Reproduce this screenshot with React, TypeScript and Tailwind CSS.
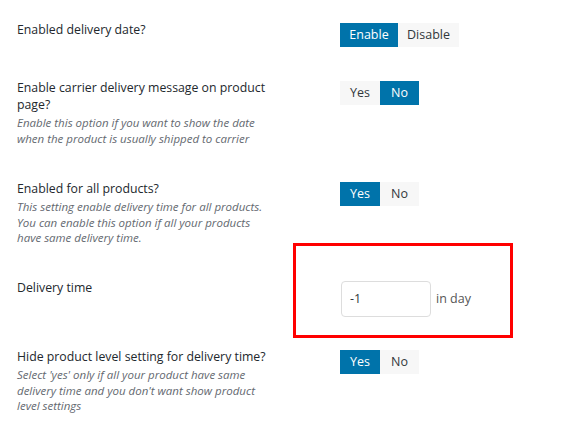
import React from 'react';

type Opt = { label: string; width: number; active: boolean };

function Toggle({ options }: { options: Opt[] }) {
  return (
    <div className="mt-[2px] flex">
      {options.map((o) => (
        <span
          key={o.label}
          style={{ width: o.width }}
          className={
            o.active
              ? 'flex h-[24px] items-center justify-center bg-[#0073aa] text-[12.5px] text-white'
              : 'flex h-[24px] items-center justify-center bg-[#f7f7f7] text-[12.5px] text-[#32373c]'
          }
        >
          {o.label}
        </span>
      ))}
    </div>
  );
}

function Label({ title, desc }: { title: string; desc?: string }) {
  return (
    <div className="w-[340px] shrink-0 pl-[17px] pr-[72px]">
      <div className="text-[12.3px] font-medium leading-[17px] text-[#23282d]">{title}</div>
      {desc && (
        <p className="mt-[2px] text-[11.5px] italic leading-[15.5px] text-[#646970]">{desc}</p>
      )}
    </div>
  );
}

export default function App() {
  return (
    <div
      className="min-h-screen w-full bg-white pt-[21px]"
      style={{ fontFamily: '"Open Sans", "Noto Sans", sans-serif' }}
    >
      <div className="flex h-[58px] items-start">
        <Label title="Enabled delivery date?" />
        <Toggle
          options={[
            { label: 'Enable', width: 58, active: true },
            { label: 'Disable', width: 61, active: false },
          ]}
        />
      </div>

      <div className="flex h-[101px] items-start">
        <Label
          title="Enable carrier delivery message on product page?"
          desc="Enable this option if you want to show the date when the product is usually shipped to carrier"
        />
        <Toggle
          options={[
            { label: 'Yes', width: 40, active: false },
            { label: 'No', width: 39, active: true },
          ]}
        />
      </div>

      <div className="flex h-[99px] items-start">
        <Label
          title="Enabled for all products?"
          desc="This setting enable delivery time for all products. You can enable this option if all your products have same delivery time."
        />
        <Toggle
          options={[
            { label: 'Yes', width: 40, active: true },
            { label: 'No', width: 39, active: false },
          ]}
        />
      </div>

      <div className="flex h-[69px] items-start">
        <Label title="Delivery time" />
        <div className="relative ml-[1px] mt-[2px] flex items-center">
          <div className="flex h-[36px] w-[90px] items-center rounded-[4px] border border-[#dddddd] bg-white px-[8px] text-[12.5px] text-[#32373c]">
            -1
          </div>
          <span className="ml-[5px] text-[12.5px] text-[#555555]">in day</span>
          <div className="pointer-events-none absolute left-[-48px] top-[-38px] h-[95px] w-[220px] border-[3px] border-[#ff0000]" />
        </div>
      </div>

      <div className="flex items-start">
        <Label
          title="Hide product level setting for delivery time?"
          desc="Select 'yes' only if all your product have same delivery time and you don't want show product level settings"
        />
        <Toggle
          options={[
            { label: 'Yes', width: 40, active: true },
            { label: 'No', width: 39, active: false },
          ]}
        />
      </div>
    </div>
  );
}
